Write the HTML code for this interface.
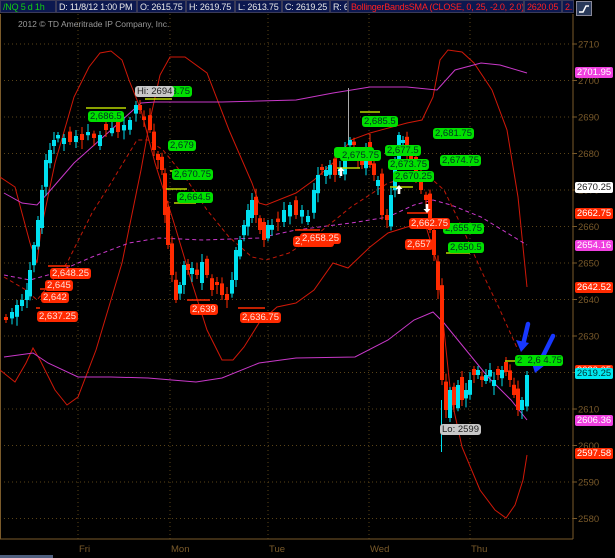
<!DOCTYPE html>
<html><head><meta charset="utf-8"><style>
html,body{margin:0;padding:0;background:#000;width:615px;height:558px;overflow:hidden;font-family:"Liberation Sans",sans-serif}
#hdr{position:absolute;left:0;top:0;height:14px;width:575px;background:#000}
.c{position:absolute;top:0;height:13px;line-height:13px;font-size:9px;letter-spacing:-0.2px;color:#e8e8e8;background:#0c1850;border:1px solid #3a3a58;box-sizing:border-box;padding-left:2px;white-space:nowrap;overflow:hidden}
.lb{position:absolute;height:11px;line-height:11px;font-size:9.5px;border-radius:3px;padding:0 2px;white-space:nowrap;box-sizing:border-box}
.g{background:#00e000;color:#032}
.r{background:#ff2a00;color:#ffe0d8}
.gr{background:#c8c8c8;color:#222}
.ax{position:absolute;left:575px;width:38px;height:11px;line-height:11px;font-size:9.5px;border-radius:2px;text-align:center}
</style></head><body>
<svg id="s" width="615" height="558" style="position:absolute;left:0;top:0"></svg>
<div id="hdr">
<div class="c" style="left:0;width:56px;color:#10d010">/NQ 5 d 1h</div>
<div class="c" style="left:56px;width:81px">D: 11/8/12 1:00 PM</div>
<div class="c" style="left:137px;width:49px">O: 2615.75</div>
<div class="c" style="left:186px;width:49px">H: 2619.75</div>
<div class="c" style="left:235px;width:47px">L: 2613.75</div>
<div class="c" style="left:282px;width:48px">C: 2619.25</div>
<div class="c" style="left:330px;width:18px">R: 6</div>
<div class="c" style="left:348px;width:176px;color:#ff2020">BollingerBandsSMA (CLOSE, 0, 25, -2.0, 2.0)</div>
<div class="c" style="left:524px;width:38px;color:#ff2020">2620.05</div>
<div class="c" style="left:562px;width:12px;color:#ff2020">2.</div>
</div>
<div style="position:absolute;left:576px;top:1px;width:14px;height:13px;background:#2a3a5a;border:1px solid #889"><svg width="14" height="13"><path d="M2 10 H6 L9 4 H12" stroke="#fff" stroke-width="1.5" fill="none"/></svg></div>
<div style="position:absolute;left:18px;top:19px;font-size:8.5px;color:#9a9a9a">2012 © TD Ameritrade IP Company, Inc.</div>

<div class="lb g" style="left:88px;top:111px">2,686.5</div>
<div class="lb g" style="left:150px;top:86px;width:42px;text-align:right">3.75</div>
<div class="lb gr" style="left:135px;top:86px">Hi: 2694</div>
<div class="lb g" style="left:168px;top:140px">2,679</div>
<div class="lb g" style="left:172px;top:169px">2,670.75</div>
<div class="lb g" style="left:177px;top:192px">2,664.5</div>
<div class="lb g" style="left:362px;top:116px">2,685.5</div>
<div class="lb g" style="left:433px;top:128px">2,681.75</div>
<div class="lb g" style="left:334px;top:147px;width:40px">&nbsp;</div>
<div class="lb g" style="left:385px;top:145px">2,677.5</div>
<div class="lb g" style="left:340px;top:150px">2,675.75</div>
<div class="lb g" style="left:388px;top:159px">2,673.75</div>
<div class="lb g" style="left:440px;top:155px">2,674.75</div>
<div class="lb g" style="left:393px;top:171px">2,670.25</div>
<div class="lb g" style="left:443px;top:223px">2,655.75</div>
<div class="lb g" style="left:448px;top:242px">2,650.5</div>
<div class="lb g" style="left:515px;top:355px;width:48px">2 &nbsp;2,6&nbsp;4.75</div>
<div class="lb r" style="left:50px;top:268px">2,648.25</div>
<div class="lb r" style="left:45px;top:280px">2,645</div>
<div class="lb r" style="left:41px;top:292px">2,642</div>
<div class="lb r" style="left:37px;top:311px">2,637.25</div>
<div class="lb r" style="left:190px;top:304px">2,639</div>
<div class="lb r" style="left:240px;top:312px">2,636.75</div>
<div class="lb r" style="left:293px;top:236px">2,657.25</div>
<div class="lb r" style="left:300px;top:233px">2,658.25</div>
<div class="lb r" style="left:409px;top:218px">2,662.75</div>
<div class="lb r" style="left:405px;top:239px">2,657</div>
<div class="lb gr" style="left:440px;top:424px">Lo: 2599</div>

<div class="ax" style="top:67px;background:#f040e0;color:#fff">2701.95</div>
<div class="ax" style="top:182px;background:#fff;color:#222">2670.25</div>
<div class="ax" style="top:208px;background:#ff2a00;color:#fff">2662.75</div>
<div class="ax" style="top:240px;background:#f040e0;color:#fff">2654.16</div>
<div class="ax" style="top:282px;background:#ff2a00;color:#fff">2642.52</div>
<div class="ax" style="top:365px;background:#ff2a00;color:#fff">2620.05</div>
<div class="ax" style="top:368px;background:#00e8f0;color:#033">2619.25</div>
<div class="ax" style="top:415px;background:#f040e0;color:#fff">2606.36</div>
<div class="ax" style="top:448px;background:#ff2a00;color:#fff">2597.58</div>

<script>
var s=document.getElementById('s'),h='';
function Y(p){return 44+(2710-p)*3.65}
for(var p=2710;p>=2580;p-=10){var y=Y(p).toFixed(1);
h+='<line x1="0" y1="'+y+'" x2="573" y2="'+y+'" stroke="#5a4418" stroke-dasharray="1,3"/>';
h+='<line x1="573" y1="'+y+'" x2="577" y2="'+y+'" stroke="#7a5a2a"/>';
h+='<text x="578" y="'+(+y+3.5)+'" fill="#7a5a2a" font-size="9.5" font-family="Liberation Sans">'+p+'</text>';}
var days=[[78,'Fri'],[170,'Mon'],[268,'Tue'],[369,'Wed'],[470,'Thu']];
days.forEach(function(d){h+='<line x1="'+d[0]+'" y1="14" x2="'+d[0]+'" y2="539" stroke="#5a4418" stroke-dasharray="1,3"/>';
h+='<text x="'+(d[0]+1)+'" y="552" fill="#7a5a2a" font-size="9.5" font-family="Liberation Sans">'+d[1]+'</text>';});
h+='<line x1="0" y1="539" x2="573" y2="539" stroke="#7a5a2a"/><line x1="573" y1="14" x2="573" y2="539" stroke="#7a5a2a"/><line x1="0.5" y1="14" x2="0.5" y2="539" stroke="#7a5a2a"/>';
h+='<rect x="0" y="555" width="53" height="3" fill="#506080"/>';
function pl(pts,c,w,d){h+='<polyline fill="none" stroke="'+c+'" stroke-width="'+w+'" '+(d?'stroke-dasharray="'+d+'"':'')+' points="'+pts+'"/>';}
pl("0,177 15,187 30,243 37,263 41,230 55,163 74,97 89,67 100,53 111,51 122,60 129,80 141,110 155,163 174,223 192,283 207,330 222,360 233,360 244,347 259,323 277,307 296,303 314,290 333,263 348,268 370,247 388,233 407,227 425,223 437,263 444,330 451,397 462,447 480,490 495,510 506,518 515,505 523,480 527,455","#d01808",1);
pl("0,370 15,382 26,363 33,348 40,360 55,390 67,405 78,397 96,350 122,263 141,170 150,120 160,75 170,57 185,57 207,73 229,130 252,183 259,203 266,205 296,193 314,180 333,163 351,140 370,133 407,123 422,120 433,97 440,60 448,50 462,52 474,63 492,90 507,130 518,197 527,287","#d01808",1);
pl("4,193 22,203 37,205 48,193 74,163 111,130 141,103 155,102 222,102 296,100 333,93 370,87 407,87 437,90 455,70 481,63 500,65 527,73","#c838c8",1);
pl("4,357 33,353 48,363 78,377 111,377 148,378 196,382 222,378 259,363 296,358 355,357 388,340 414,320 433,312 444,323 466,350 488,377 511,400 527,420","#c838c8",1);
pl("4,275 30,280 55,273 92,257 129,243 159,238 203,240 259,238 296,230 351,223 388,217 414,205 433,200 451,205 481,217 527,245","#c838c8",1,"4,3");
pl("4,277 26,290 37,300 67,263 92,213 111,183 137,140 148,140 163,150 185,177 207,210 229,237 252,257 266,260 289,253 314,237 351,207 388,183 425,173 444,190 462,227 481,270 500,310 518,350","#c01808",1,"4,3");
var k=[[4,320],[10,312],[15,305],[20,300],[25,290],[28,270],[32,245],[36,220],[40,190],[44,160],[48,150],[52,140],[56,135],[62,138],[68,142],[74,136],[80,140],[86,132],[92,138],[98,135],[104,130],[110,128],[116,132],[122,125],[128,120],[134,105],[138,110],[142,120],[148,130],[152,150],[156,160],[160,170],[163,215],[166,245],[170,275],[174,300],[178,285],[182,265],[186,270],[190,268],[195,275],[200,262],[205,275],[210,290],[215,285],[220,295],[225,300],[230,280],[234,250],[238,240],[242,225],[246,210],[250,200],[254,215],[258,230],[262,240],[266,225],[270,225],[276,222],[282,210],[288,205],[294,215],[300,210],[306,216],[312,190],[316,175],[320,170],[324,170],[328,165],[333,175],[338,168],[343,150],[348,140],[352,145],[356,160],[360,165],[364,150],[368,165],[372,175],[376,180],[380,215],[385,220],[389,195],[393,165],[397,135],[401,140],[405,150],[409,165],[414,175],[419,190],[424,200],[428,230],[432,255],[436,290],[440,380],[444,410],[448,390],[452,405],[456,385],[460,400],[464,390],[468,380],[472,375],[476,370],[480,380],[484,375],[488,370],[492,380],[496,375],[500,370],[504,372],[508,380],[512,395],[516,410],[520,400],[525,375]];
var prev=325;
k.forEach(function(c,i){var j=((i*37)%11-5)*1.6;var o=prev+j,cl=c[1];if(Math.abs(cl-o)<3)o=cl+(i%2?6:-6);var col=cl>o?'#ff2a00':'#00e0f0';var t=Math.min(o,cl),b=Math.max(o,cl);
var w1=3+((i*7)%6),w2=3+((i*3)%7);
h+='<line x1="'+(c[0]+2)+'" y1="'+(t-w1)+'" x2="'+(c[0]+2)+'" y2="'+(b+w2)+'" stroke="'+col+'"/>';
h+='<rect x="'+c[0]+'" y="'+t+'" width="4" height="'+(b-t)+'" fill="'+col+'"/>';prev=cl;});
h+='<line x1="441.5" y1="400" x2="441.5" y2="452" stroke="#00e0f0"/><line x1="348.5" y1="88" x2="348.5" y2="140" stroke="#aaa"/>';
[[86,108,126,'#b8d800'],[145,99,172,'#b8d800'],[166,189,187,'#b8d800'],[170,171,190,'#b8d800'],[174,203,196,'#b8d800'],[360,112,380,'#b8d800'],[337,168,360,'#b8d800'],[390,187,413,'#b8d800'],[446,253,470,'#b8d800'],[505,361,520,'#b8d800'],[48,266,70,'#ff2a00'],[40,289,46,'#ff2a00'],[36,308,40,'#ff2a00'],[187,300,210,'#ff2a00'],[238,308,265,'#ff2a00'],[295,230,320,'#ff2a00'],[407,213,428,'#ff2a00']].forEach(function(m){h+='<line x1="'+m[0]+'" y1="'+m[1]+'" x2="'+m[2]+'" y2="'+m[1]+'" stroke="'+m[3]+'" stroke-width="1.5"/>';});
function wa(x,y,up){var d=up?-1:1;h+='<path d="M'+x+' '+y+' l-3.5 '+(-4*d)+' h2.2 v'+(-5*d)+' h2.6 v'+(5*d)+' h2.2 z" fill="#fff"/>';}
wa(341,167,true);wa(399,185,true);wa(427,213,false);
h+='<path d="M528 324 L523 345" stroke="#1838ff" stroke-width="4.5" stroke-linecap="round"/><path d="M516 340 L521 352 L529 343 z" fill="#1838ff"/>';
h+='<path d="M553 336 L538 366" stroke="#1838ff" stroke-width="4.5" stroke-linecap="round"/><path d="M531 360 L535 373 L545 365 z" fill="#1838ff"/>';
s.innerHTML=h;
</script>
</body></html>
